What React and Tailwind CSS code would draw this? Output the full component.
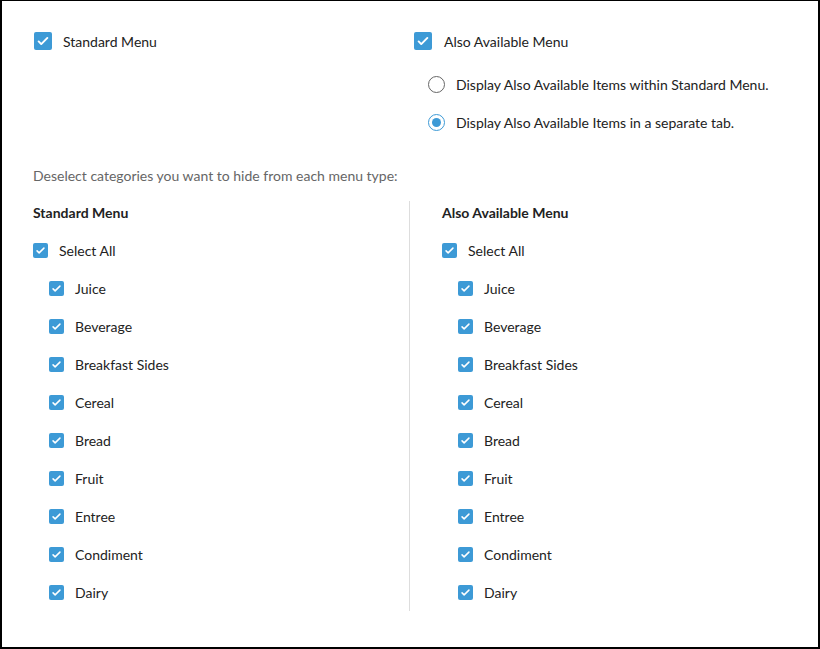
import React, { useState } from 'react';

const categories = ['Juice', 'Beverage', 'Breakfast Sides', 'Cereal', 'Bread', 'Fruit', 'Entree', 'Condiment', 'Dairy'];

function Check({ big }) {
    return (
        <span className={`flex items-center justify-center rounded-[2px] bg-[#3d9ad6] shrink-0 ${big ? 'w-[18px] h-[18px]' : 'w-[15px] h-[15px]'}`}>
            <svg viewBox="0 0 16 16" className={big ? 'w-[14px] h-[14px]' : 'w-[11px] h-[11px]'} fill="none" stroke="white" strokeWidth="2.2" strokeLinecap="round" strokeLinejoin="round">
                <path d="M3 8.5l3 3 7-7" />
            </svg>
        </span>
    );
}

function Radio({ on }) {
    return (
        <span className={`flex items-center justify-center w-[17px] h-[17px] rounded-full border-[1.5px] shrink-0 ${on ? 'border-[#3d9ad6]' : 'border-[#666]'}`}>
            {on && <span className="w-[9px] h-[9px] rounded-full bg-[#3d9ad6]" />}
        </span>
    );
}

function Column({ title }) {
    return (
        <div className="flex flex-col gap-[18px]">
            <div className="h-[19px] leading-5 font-bold text-[14px] text-[#222]">{title}</div>
            <div className="h-5 flex items-center gap-[11px]">
                <Check />
                <span>Select All</span>
            </div>
            {categories.map((c) => (
                <div key={c} className="h-5 flex items-center gap-[11px] pl-[16px]">
                    <Check />
                    <span>{c}</span>
                </div>
            ))}
        </div>
    );
}

export default function App() {
    const [sep] = useState(true);
    return (
        <div className="w-[820px] h-[649px] bg-white border-2 border-t border-black font-['Lato','Liberation_Sans',sans-serif] text-[14px] text-[#222]">
            <div className="pl-[31px] pt-[31px]">
                {/* Menu toggles */}
                <div className="flex">
                    <div className="w-[381px] h-[18px] flex items-center gap-[11px] pl-[1px]">
                        <Check big />
                        <span>Standard Menu</span>
                    </div>
                    <div className="flex flex-col">
                        <div className="h-[18px] flex items-center gap-[12px]">
                            <Check big />
                            <span>Also Available Menu</span>
                        </div>
                        <div className="flex flex-col gap-[18px] mt-[24px] pl-[14px]">
                            <div className="h-5 flex items-center gap-[11px]">
                                <Radio on={!sep} />
                                <span>Display Also Available Items within Standard Menu.</span>
                            </div>
                            <div className="h-5 flex items-center gap-[11px]">
                                <Radio on={sep} />
                                <span>Display Also Available Items in a separate tab.</span>
                            </div>
                        </div>
                    </div>
                </div>

                <div className="mt-[34px] h-5 leading-5 text-[#666]">Deselect categories you want to hide from each menu type:</div>

                {/* Category columns */}
                <div className="flex mt-[15px]">
                    <div className="w-[377px] border-r border-[#ddd] pt-[2px] pb-[9px]">
                        <Column title="Standard Menu" />
                    </div>
                    <div className="pl-[32px] pt-[2px]">
                        <Column title="Also Available Menu" />
                    </div>
                </div>
            </div>
        </div>
    );
}
